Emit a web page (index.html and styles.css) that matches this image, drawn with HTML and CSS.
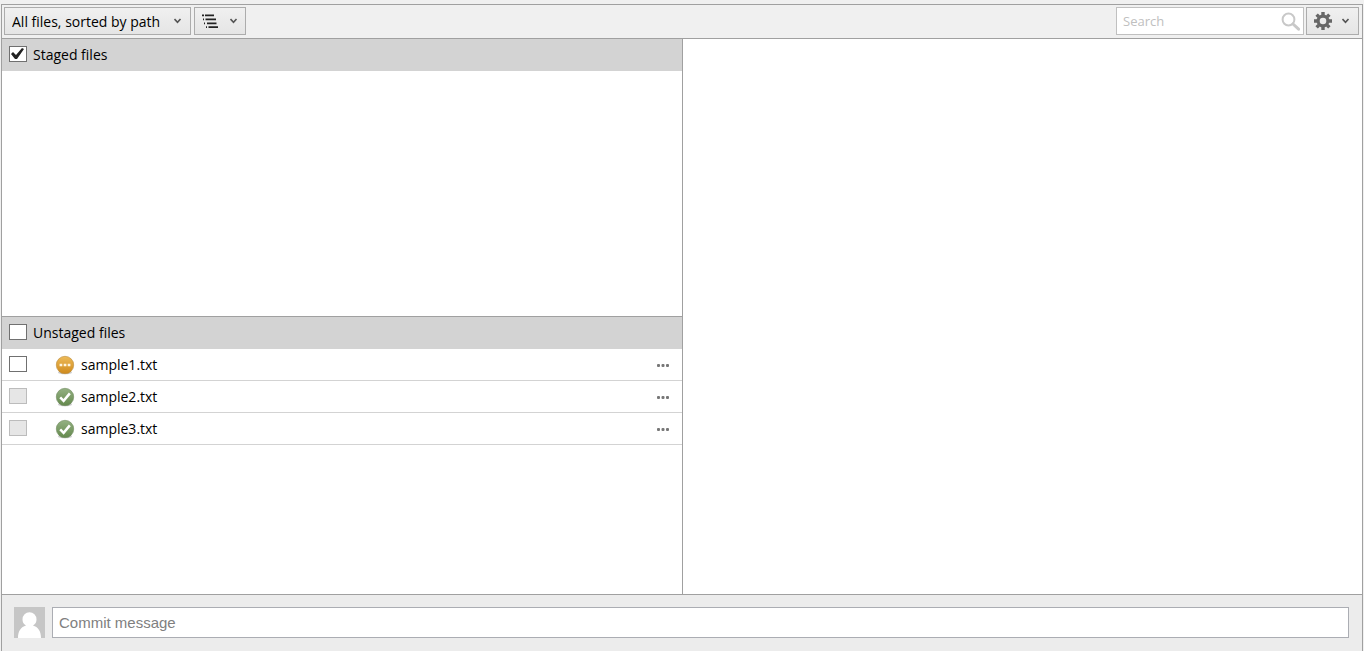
FILE: index.html
```html
<!DOCTYPE html>
<html lang="en">
<head>
    <meta charset="UTF-8">
    <meta name="viewport" content="width=device-width, initial-scale=1.0">
    <title>File status</title>
    <link rel="stylesheet" href="styles.css">
</head>
<body>
    <!-- Shared icons -->
    <svg class="icon-defs" aria-hidden="true">
        <defs>
            <linearGradient id="amber" x1="0" y1="0" x2="0" y2="1">
                <stop offset="0" stop-color="#eebb58"/>
                <stop offset="1" stop-color="#cf8a1c"/>
            </linearGradient>
            <linearGradient id="green" x1="0" y1="0" x2="0" y2="1">
                <stop offset="0" stop-color="#94b183"/>
                <stop offset="1" stop-color="#64894d"/>
            </linearGradient>
            <symbol id="chevron" viewBox="0 0 8 6">
                <path d="M.5 1l3 3.300L6.500 1" fill="none" stroke="#555" stroke-width="1.6"/>
            </symbol>
            <symbol id="modified" viewBox="0 0 20 20">
                <ellipse cx="10" cy="17.5" rx="7" ry="1.8" fill="#000" opacity=".2"/>
                <circle cx="10" cy="10" r="8.7" fill="url(#amber)" stroke="#b98a3a" stroke-width=".6"/>
                <path d="M4.600 8.800h2.700v2.500H4.600zM8.700 8.800h2.700v2.500H8.700zM12.700 8.800h2.700v2.500h-2.700z" fill="#fff6df"/>
            </symbol>
            <symbol id="clean" viewBox="0 0 20 20">
                <ellipse cx="10" cy="17.5" rx="7" ry="1.8" fill="#000" opacity=".2"/>
                <circle cx="10" cy="10" r="8.7" fill="url(#green)" stroke="#6f8a5e" stroke-width=".6"/>
                <path d="M5.2 10.4l3.4 3.4 6.2-7.4" fill="none" stroke="#fff" stroke-width="2.5"/>
            </symbol>
            <symbol id="dots" viewBox="0 0 12 3">
                <rect width="3" height="3" rx="1"/>
                <rect x="4.500" width="3" height="3" rx="1"/>
                <rect x="9" width="3" height="3" rx="1"/>
            </symbol>
        </defs>
    </svg>

    <div class="window">
        <header class="toolbar">
            <div class="dropdown">
                <select class="btn filter" aria-label="File filter">
                    <option>All files, sorted by path</option>
                </select>
                <svg class="chevron"><use href="#chevron"/></svg>
            </div>
            <button class="btn" type="button" aria-label="View mode">
                <svg class="list-icon" viewBox="0 0 16 14" fill="none" stroke="#222" stroke-width="1.7">
                    <path d="M0 1.300h2M3 1.300h9M1 5.300h1M3.500 5.300H14M2 9.300h1M5 9.300h9.500M4 13.100h1M6.500 13.100H16"/>
                </svg>
                <svg class="chevron"><use href="#chevron"/></svg>
            </button>
            <div class="search">
                <input class="search-input" type="text" placeholder="Search" aria-label="Search">
                <svg class="search-icon" viewBox="0 0 20 20" fill="none" stroke="#c8c8c8">
                    <circle cx="7.5" cy="7.5" r="5.9" stroke-width="2"/>
                    <path d="M12 12l5.6 5.2" stroke-width="3" stroke-linecap="round"/>
                </svg>
            </div>
            <button class="btn settings" type="button" aria-label="Settings">
                <svg class="gear" viewBox="0 0 18 18">
                    <circle cx="9" cy="9" r="4.9" fill="none" stroke="#666" stroke-width="3.2"/>
                    <path d="M9 0v3M9 15v3M0 9h3M15 9h3M2.6 2.6l2.2 2.2M13.2 13.2l2.2 2.2M2.6 15.4l2.2-2.2M13.2 4.8l2.2-2.2" stroke="#666" stroke-width="3.4"/>
                </svg>
                <svg class="chevron"><use href="#chevron"/></svg>
            </button>
        </header>

        <main class="content">
            <div class="files">
                <section class="group">
                    <label class="group-header">
                        <input class="check" type="checkbox" checked>
                        Staged files
                    </label>
                </section>
                <section class="group unstaged">
                    <label class="group-header">
                        <input class="check" type="checkbox">
                        Unstaged files
                    </label>
                    <ul class="file-list">
                        <li class="file">
                            <input class="check" type="checkbox" id="file1">
                            <svg class="status"><use href="#modified"/></svg>
                            <label for="file1">sample1.txt</label>
                            <button class="more" type="button" aria-label="More"><svg class="dots"><use href="#dots"/></svg></button>
                        </li>
                        <li class="file">
                            <input class="check" type="checkbox" id="file2" disabled>
                            <svg class="status"><use href="#clean"/></svg>
                            <label for="file2">sample2.txt</label>
                            <button class="more" type="button" aria-label="More"><svg class="dots"><use href="#dots"/></svg></button>
                        </li>
                        <li class="file">
                            <input class="check" type="checkbox" id="file3" disabled>
                            <svg class="status"><use href="#clean"/></svg>
                            <label for="file3">sample3.txt</label>
                            <button class="more" type="button" aria-label="More"><svg class="dots"><use href="#dots"/></svg></button>
                        </li>
                    </ul>
                </section>
            </div>
            <div class="diff"></div>
        </main>

        <footer class="commit">
            <svg class="avatar" viewBox="0 0 31 31">
                <path d="M0 0h31v31H0z" fill="#c6c6c6"/>
                <path d="M4 31c0-7 3-11 8-12.500C9.500 17 8.500 15 8.500 12.500a7 7.300 0 0 1 14 0c0 2.500-1 4.500-3.500 6C24 20 27 24 27 31z" fill="#fff"/>
            </svg>
            <input class="commit-input" type="text" placeholder="Commit message" aria-label="Commit message">
        </footer>
    </div>
</body>
</html>
```
FILE: styles.css
```css
* {
    box-sizing: border-box;
}

body {
    display: flex;
    flex-direction: column;
    min-height: 100vh;
    margin: 0;
    padding: 4px 1px 0;
    background-color: #f0f0f0;
    color: #000;
    font-family: "Open Sans", "Noto Sans", sans-serif;
    font-size: 14px;
    line-height: 20px;
}

input,
select,
button {
    margin: 0;
    border-radius: 0;
    color: inherit;
    font: inherit;
}

.icon-defs {
    position: absolute;
    width: 0;
    height: 0;
}

.window {
    display: flex;
    flex: 1;
    flex-direction: column;
    border: 1px solid #a0a0a0;
    border-bottom: none;
}

/* Toolbar */
.toolbar {
    display: flex;
    padding: 2px 3px 3px 2px;
    border-bottom: 1px solid #a0a0a0;
}

.btn {
    display: flex;
    align-items: center;
    gap: 12px;
    height: 28px;
    padding: 0 7px;
    border: 1px solid #acacac;
    background: linear-gradient(#f0f0f0, #e5e5e5);
}

.dropdown {
    position: relative;
    margin-right: 3px;
}

.filter {
    appearance: none;
    padding: 2px 29px 0 7px;
}

.chevron {
    width: 8px;
    height: 6px;
}

.dropdown .chevron {
    position: absolute;
    top: 11px;
    right: 9px;
    pointer-events: none;
}

.list-icon {
    width: 16px;
    height: 14px;
}

.search {
    position: relative;
    margin-left: auto;
}

.search-input {
    width: 188px;
    height: 28px;
    padding: 0 26px 0 6px;
    border: 1px solid #c0c0c0;
    background-color: #fff;
    font-size: 13px;
}

.search-input::placeholder {
    color: #c0c0c0;
}

.search-icon {
    position: absolute;
    top: 5px;
    right: 3px;
    width: 20px;
    height: 20px;
}

.settings {
    gap: 10px;
    margin-left: 2px;
    padding: 0 8px 0 7px;
}

.gear {
    width: 18px;
    height: 18px;
}

/* File panes */
.content {
    display: flex;
    flex: 1;
    background-color: #fff;
}

.files {
    display: flex;
    flex: 1;
    flex-direction: column;
}

.diff {
    flex: 1;
    border-left: 1px solid #a0a0a0;
}

.group {
    flex: 1;
}

.unstaged {
    border-top: 1px solid #a0a0a0;
}

.group-header {
    display: flex;
    align-items: center;
    gap: 6px;
    height: 32px;
    padding: 0 7px;
    background-color: #d3d3d3;
}

.check {
    flex: none;
    appearance: none;
    width: 18px;
    height: 16px;
    margin-bottom: 2px;
    border: 1px solid #707070;
    background-color: #fff;
}

.check:checked::before {
    content: "";
    display: block;
    height: 14px;
    background-color: #212121;
    clip-path: polygon(1px 7px, 3px 5px, 6px 8px, 12px 1px, 14px 2px, 7px 12px, 5px 12px);
}

.check:disabled {
    border-color: #bcbcbc;
    background-color: #e6e6e6;
}

.file-list {
    margin: 0;
    padding: 0;
    list-style: none;
}

.file {
    display: flex;
    align-items: center;
    height: 32px;
    padding: 0 13px 0 7px;
    border-bottom: 1px solid #d3d3d3;
}

.status {
    width: 20px;
    height: 20px;
    margin: 0 6px 0 28px;
}

.more {
    display: flex;
    margin-left: auto;
    padding: 5px 0 4px;
    border: none;
    background: none;
}

.dots {
    width: 12px;
    height: 3px;
    fill: #777;
}

/* Commit bar */
.commit {
    display: flex;
    gap: 7px;
    padding: 12px 13px 13px 12px;
    border-top: 1px solid #a0a0a0;
    background-color: #ececec;
}

.avatar {
    width: 31px;
    height: 31px;
}

.commit-input {
    flex: 1;
    height: 31px;
    padding: 0 6px;
    border: 1px solid #abadb3;
    background-color: #fff;
    font-family: "Liberation Sans", Arial, sans-serif;
    font-size: 15px;
}

.commit-input::placeholder {
    color: #808080;
}
```
